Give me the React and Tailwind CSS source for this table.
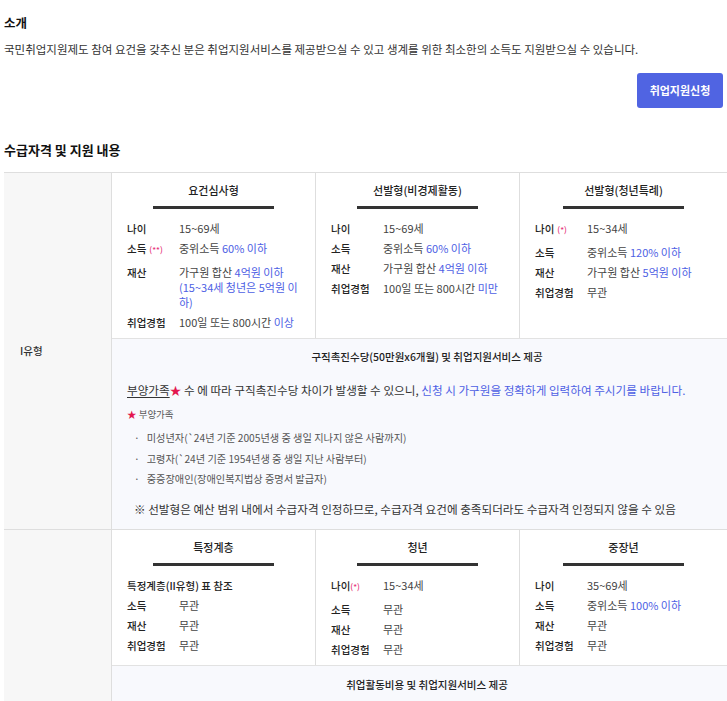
import React from "react";

const blue = "text-[#4d60e4]";

const rowOne = [
  {
    title: "요건심사형",
    rows: [
      { label: "나이", value: [{ t: "15~69세" }] },
      { label: "소득", mark: "(**)", value: [{ t: "중위소득 " }, { t: "60% 이하", blue: true }] },
      {
        label: "재산",
        value: [{ t: "가구원 합산 " }, { t: "4억원 이하 (15~34세 청년은 5억원 이하)", blue: true }],
      },
      { label: "취업경험", value: [{ t: "100일 또는 800시간 " }, { t: "이상", blue: true }] },
    ],
  },
  {
    title: "선발형(비경제활동)",
    rows: [
      { label: "나이", value: [{ t: "15~69세" }] },
      { label: "소득", value: [{ t: "중위소득 " }, { t: "60% 이하", blue: true }] },
      { label: "재산", value: [{ t: "가구원 합산 " }, { t: "4억원 이하", blue: true }] },
      { label: "취업경험", value: [{ t: "100일 또는 800시간 " }, { t: "미만", blue: true }] },
    ],
  },
  {
    title: "선발형(청년특례)",
    rows: [
      { label: "나이", mark: "(*)", value: [{ t: "15~34세" }] },
      { label: "소득", value: [{ t: "중위소득 " }, { t: "120% 이하", blue: true }] },
      { label: "재산", value: [{ t: "가구원 합산 " }, { t: "5억원 이하", blue: true }] },
      { label: "취업경험", value: [{ t: "무관" }] },
    ],
  },
];

const rowTwo = [
  {
    title: "특정계층",
    note: "특정계층(II유형) 표 참조",
    rows: [
      { label: "소득", value: [{ t: "무관" }] },
      { label: "재산", value: [{ t: "무관" }] },
      { label: "취업경험", value: [{ t: "무관" }] },
    ],
  },
  {
    title: "청년",
    rows: [
      { label: "나이", mark: "(*)", tight: true, value: [{ t: "15~34세" }] },
      { label: "소득", value: [{ t: "무관" }] },
      { label: "재산", value: [{ t: "무관" }] },
      { label: "취업경험", value: [{ t: "무관" }] },
    ],
  },
  {
    title: "중장년",
    rows: [
      { label: "나이", value: [{ t: "35~69세" }] },
      { label: "소득", value: [{ t: "중위소득 " }, { t: "100% 이하", blue: true }] },
      { label: "재산", value: [{ t: "무관" }] },
      { label: "취업경험", value: [{ t: "무관" }] },
    ],
  },
];

const rowTwoItems = [
  "1단계 참여수당 최대 25만원",
  "2단계 참여수당 최대 195.4만원",
  "3단계 취업성공수당 최대 150만원",
  "직업훈련 참여 시 훈련비 지원",
  "일경험 프로그램 참여 시 참여수당 지원",
  "취업 후 근속 기간에 따라 취업성공수당 차등 지급",
  "구직활동 중 발생하는 교통비 등 실비 일부 지원",
];

function Card({ card, last }) {
  return (
    <div className={`px-[15px] pt-[10px] pb-[8px] ${last ? "" : "border-r border-[#dedede]"}`}>
      <div className="text-center text-[11px] leading-[15px] font-medium text-[#222]">{card.title}</div>
      <div className="mx-auto mt-[8px] h-[3px] w-[121px] bg-[#333]" />
      <div className="mt-[12px] flex flex-col gap-[5px]">
        {card.note && (
          <div className="text-[10.5px] leading-[15px] font-medium text-[#222]">{card.note}</div>
        )}
        {card.rows.map((row) => (
          <div key={row.label} className={`flex leading-[15px] ${row.mark ? "pb-[3px]" : ""}`}>
            <div className="w-[52px] shrink-0 text-[10.5px] font-medium text-[#222]">
              {row.label}
              {row.mark && (
                <span className={`${row.tight ? "" : "ml-[3px]"} text-[8px] text-[#e6337a]`}>{row.mark}</span>
              )}
            </div>
            <div className="text-[11px] text-[#444]">
              {row.value.map((v, i) => (
                <span key={i} className={v.blue ? blue : ""}>
                  {v.t}
                </span>
              ))}
            </div>
          </div>
        ))}
      </div>
    </div>
  );
}

function Cards({ cards }) {
  return (
    <div className="grid grid-cols-[204px_204px_1fr] border-b border-[#e2e2e2] bg-white">
      {cards.map((c, i) => (
        <Card key={c.title} card={c} last={i === cards.length - 1} />
      ))}
    </div>
  );
}

function Bullets({ items }) {
  return (
    <ul className="mt-[8px] flex flex-col gap-[5.5px] pl-[7px] text-[10.2px] leading-[15px] text-[#555]">
      {items.map((item) => (
        <li key={item} className="flex gap-[7px]">
          <span>·</span>
          {item}
        </li>
      ))}
    </ul>
  );
}

export default function App() {
  return (
    <div className="min-h-[701px] w-[727px] overflow-hidden bg-white pl-[4px] font-['Noto_Sans_CJK_KR',sans-serif] text-[#333]">
      <h2 className="pt-[14px] text-[12.5px] leading-[18px] font-bold text-[#111]">소개</h2>
      <p className="mt-[9px] text-[11.5px] leading-[16px] text-[#333]">
        국민취업지원제도 참여 요건을 갖추신 분은 취업지원서비스를 제공받으실 수 있고 생계를 위한 최소한의 소득도 지원받으실 수 있습니다.
      </p>
      <div className="mt-[16px] flex justify-end pr-[4px]">
        <button
          type="button"
          className="h-[35px] w-[86px] rounded-[3px] bg-[#5064e2] text-[11px] font-bold text-white"
        >
          취업지원신청
        </button>
      </div>
      <h2 className="mt-[33px] text-[13px] leading-[18px] font-bold text-[#111]">수급자격 및 지원 내용</h2>

      <div className="mt-[13px] border-t border-[#dedede]">
        <div className="flex border-b border-[#dedede]">
          <div className="flex w-[108px] shrink-0 items-center border-r border-[#dedede] bg-[#f7f7f7] pl-[16px]">
            <span className="text-[10.5px] font-medium text-[#333]">I유형</span>
          </div>
          <div className="flex-1">
            <Cards cards={rowOne} />
            <div className="bg-[#f8f9fd] pt-[10px] pb-[11px] pl-[15px]">
              <div className="text-center text-[10.5px] leading-[15px] font-medium text-[#222]">
                구직촉진수당(50만원x6개월) 및 취업지원서비스 제공
              </div>
              <p className="mt-[17px] text-[11.6px] leading-[18px] text-[#333]">
                <span className="underline underline-offset-2">부양가족</span>
                <span className="text-[#e3164e]">★</span> 수 에 따라 구직촉진수당 차이가 발생할 수 있으니,{" "}
                <span className={blue}>신청 시 가구원을 정확하게 입력하여 주시기를 바랍니다.</span>
              </p>
              <div className="mt-[8px] text-[9.5px] leading-[15px] text-[#555]">
                <span className="text-[#e3164e]">★</span> 부양가족
              </div>
              <Bullets
                items={[
                  "미성년자(`24년 기준 2005년생 중 생일 지나지 않은 사람까지)",
                  "고령자(`24년 기준 1954년생 중 생일 지난 사람부터)",
                  "중증장애인(장애인복지법상 증명서 발급자)",
                ]}
              />
              <p className="mt-[14px] pl-[7px] text-[11.6px] leading-[18px] text-[#333]">
                ※ 선발형은 예산 범위 내에서 수급자격 인정하므로, 수급자격 요건에 충족되더라도 수급자격 인정되지 않을 수 있음
              </p>
            </div>
          </div>
        </div>

        <div className="flex border-b border-[#dedede]">
          <div className="flex w-[108px] shrink-0 items-center border-r border-[#dedede] bg-[#f7f7f7] pl-[16px]">
            <span className="text-[10.5px] font-medium text-[#333]">II유형</span>
          </div>
          <div className="flex-1">
            <Cards cards={rowTwo} />
            <div className="bg-[#f8f9fd] pt-[11px] pb-[60px] pl-[15px]">
              <div className="text-center text-[10.5px] leading-[15px] font-medium text-[#222]">
                취업활동비용 및 취업지원서비스 제공
              </div>
              <p className="mt-[17px] text-[11.6px] leading-[18px] text-[#333]">
                취업지원서비스 단계별 참여에 따라 취업활동비용을 지원합니다.
              </p>
              <Bullets items={rowTwoItems} />
              <p className="mt-[14px] pl-[7px] text-[11.6px] leading-[18px] text-[#333]">
                ※ 소득 요건 등에 따라 지원 내용이 달라질 수 있음
              </p>
            </div>
          </div>
        </div>
      </div>
    </div>
  );
}
